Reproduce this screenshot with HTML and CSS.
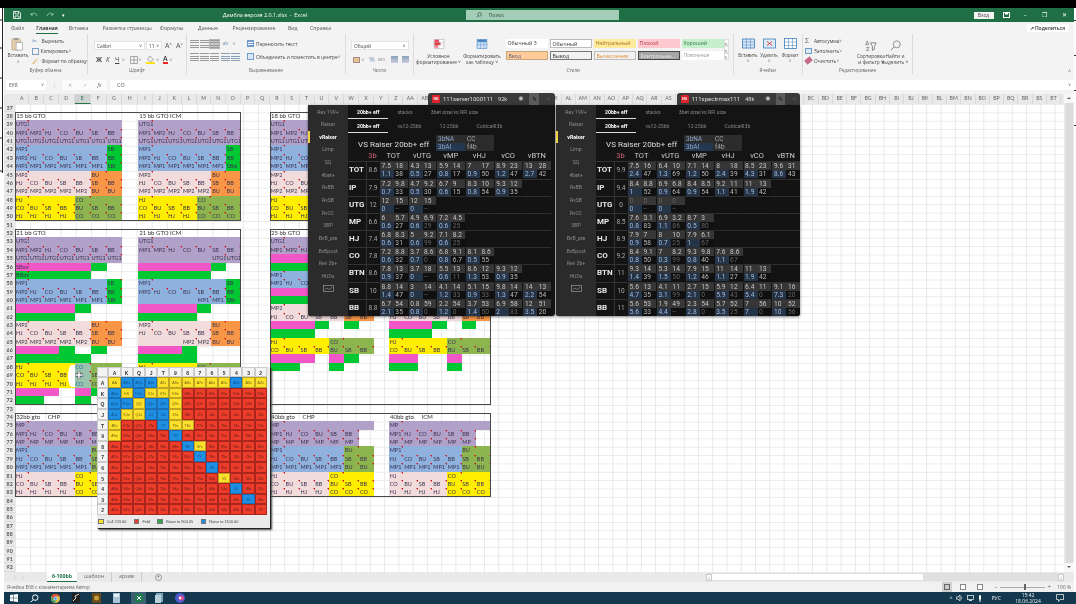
FILE: index.html
```html
<!DOCTYPE html>
<html lang="ru">
<head>
<meta charset="utf-8">
<title>Дамбла версия 2.0.1.xlsx - Excel</title>
<link rel="stylesheet" href="styles.css">
</head>
<body>
<div class="screen" id="screen">
  <div class="topblack"></div>
  <div class="main">
    <div class="edge"><svg width="4" height="200" viewBox="0 0 4 200"><path d="M2.5 0V165M0 12H3M0 40H3M0 70H3M0 100H3M0 130H3M0 163H3" stroke="#222" fill="none"/></svg></div>
    <div class="window">
      <header class="titlebar">
        <div class="qat">
          <svg width="8" height="8" viewBox="0 0 8 8"><path d="M.5.5H6L7.5 2V7.5H.5ZM2 .5V3H5.5V.5M2 7.5V5H6V7.5" fill="none" stroke="#fff" stroke-width=".8"/></svg>
          <svg class="qat-dim" width="8" height="6" viewBox="0 0 8 6"><path d="M1 3C3 0 6 1 7 4M1 1V3H3" fill="none" stroke="#8fbfa5"/></svg>
          <svg class="qat-dim" width="8" height="6" viewBox="0 0 8 6"><path d="M7 3C5 0 2 1 1 4M7 1V3H5" fill="none" stroke="#8fbfa5"/></svg>
          <span class="qat-more">▾</span>
        </div>
        <div class="doc">Дамбла версия 2.0.1.xlsx  -  Excel</div>
        <div class="search">
          <svg width="6" height="6" viewBox="0 0 6 6"><circle cx="3.6" cy="2.4" r="1.8" fill="none" stroke="#34543f" stroke-width=".7"/><path d="M2.3 3.7.6 5.4" stroke="#34543f" stroke-width=".7"/></svg>
          <span>Поиск</span>
        </div>
        <div class="winctl">
          <span class="login">Вход</span>
          <svg class="ctl-box" width="7" height="6" viewBox="0 0 7 6"><rect x=".5" y=".5" width="6" height="5" fill="none" stroke="#fff"/><rect x="2" y="1" width="3" height="1.5" fill="#fff"/></svg>
          <span class="ctl">–</span>
          <span class="ctl ctl-sq">❐</span>
          <span class="ctl">✕</span>
        </div>
      </header>

      <nav class="tabs">
        <span class="tab t1">Файл</span>
        <span class="tab t2 on">Главная</span>
        <span class="tab t3">Вставка</span>
        <span class="tab t4">Разметка страницы</span>
        <span class="tab t5">Формулы</span>
        <span class="tab t6">Данные</span>
        <span class="tab t7">Рецензирование</span>
        <span class="tab t8">Вид</span>
        <span class="tab t9">Справка</span>
        <span class="share">↗ Поделиться</span>
      </nav>

      <section class="ribbon">
        <div class="group g-clip">
          <div class="gbody">
            <div class="paste">
              <svg width="15" height="15" viewBox="0 0 15 15"><rect x="1.5" y="2" width="9" height="12" rx="1" fill="#e6cfae" stroke="#a98f6e" stroke-width=".6"/><rect x="4" y="1" width="4" height="2.4" fill="#999"/><rect x="6" y="6" width="7" height="8" fill="#fff" stroke="#8a8a8a" stroke-width=".6"/></svg>
              <span>Вставить</span><span class="caret">˅</span>
            </div>
            <div class="cliplist">
              <span><i class="ci cut">✂</i>Вырезать</span>
              <span><i class="ci copy"></i>Копировать <b class="caret">˅</b></span>
              <span><i class="ci brush">🖌</i>Формат по образцу</span>
            </div>
          </div>
          <div class="glabel">Буфер обмена</div>
        </div>

        <div class="group g-font">
          <div class="gbody col">
            <div class="line">
              <span class="combo c-font">Calibri<b>˅</b></span>
              <span class="combo c-size">11<b>˅</b></span>
              <span class="big">A<sup>˄</sup></span><span class="big">A<sup>˅</sup></span>
            </div>
            <div class="line fmt">
              <b class="fb">Ж</b><i class="fi">К</i><u class="fu">Ч</u><span class="caret">˅</span>
              <svg class="ml6" width="8" height="8" viewBox="0 0 8 8"><path d="M.5.5H7.5V7.5H.5ZM4 .5V7.5M.5 4H7.5" fill="none" stroke="#8a8a8a" stroke-width=".7"/></svg><span class="caret">˅</span>
              <svg class="ml6" width="9" height="9" viewBox="0 0 9 9"><path d="M4 1 7.5 4.5 4.5 7 1.5 4Z" fill="#eee" stroke="#777" stroke-width=".6"/><rect y="7.2" width="9" height="1.8" fill="#ffe000"/></svg><span class="caret">˅</span>
              <span class="fcolor">A</span><span class="caret">˅</span>
            </div>
          </div>
          <div class="glabel">Шрифт</div>
        </div>

        <div class="group g-align">
          <div class="gbody alignbody">
            <div class="aicons">
              <div class="line">
                <i class="al top"></i><i class="al mid"></i><i class="al bot active"></i><i class="al rot">ab</i><span class="caret">˅</span>
              </div>
              <div class="line">
                <i class="al left"></i><i class="al center"></i><i class="al right"></i><i class="al ind"></i><i class="al ind"></i>
              </div>
            </div>
            <div class="awrap">
              <span><i class="ai wrap"></i>Переносить текст</span>
              <span><i class="ai merge"></i>Объединить и поместить в центре <b class="caret">˅</b></span>
            </div>
          </div>
          <div class="glabel">Выравнивание</div>
        </div>

        <div class="group g-num">
          <div class="gbody col">
            <div class="line"><span class="combo c-num">Общий<b>˅</b></span></div>
            <div class="line numfmt">
              <i class="cash"></i><span class="caret">˅</span>
              <span class="pct">%</span><span class="k">000</span>
              <i class="dec"></i><i class="dec"></i>
            </div>
          </div>
          <div class="glabel">Число</div>
        </div>

        <div class="group g-styles">
          <div class="gbody stylesbody">
            <div class="bigbtn b-cond">
              <svg width="14" height="13" viewBox="0 0 14 13"><rect x=".5" y=".5" width="13" height="12" fill="#fff" stroke="#999" stroke-width=".6"/><rect x="1" y="1" width="6" height="3.5" fill="#e46"/><rect x="1" y="4.5" width="8" height="3.5" fill="#d33"/><rect x="1" y="8" width="5" height="3.5" fill="#e78"/><path d="M7 0V13M0 4.5H14M0 8H14" stroke="#aaa" stroke-width=".4"/></svg>
              <span>Условное<br>форматирование ˅</span>
            </div>
            <div class="bigbtn b-table">
              <svg width="14" height="13" viewBox="0 0 14 13"><rect x=".5" y=".5" width="13" height="12" fill="#cfe2f5" stroke="#3f7fbf" stroke-width=".7"/><path d="M0 4H14M0 7.5H14M5 0V13M9.5 0V13" stroke="#3f7fbf" stroke-width=".5"/><rect x="1" y="1" width="12" height="2.6" fill="#3f7fbf"/></svg>
              <span>Форматировать<br>как таблицу ˅</span>
            </div>
            <div class="gallery">
              <span class="st st-normal3">Обычный 3</span>
              <span class="st st-normal">Обычный</span>
              <span class="st st-neutral">Нейтральный</span>
              <span class="st st-bad">Плохой</span>
              <span class="st st-good">Хороший</span>
              <span class="st st-input">Ввод</span>
              <span class="st st-output">Вывод</span>
              <span class="st st-calc">Вычисления</span>
              <span class="st st-check">Контрольна...</span>
              <span class="st st-note">Пояснение</span>
            </div>
            <div class="gscroll"><i>˄</i><i>˅</i><i>≡</i></div>
          </div>
          <div class="glabel">Стили</div>
        </div>

        <div class="group g-cells">
          <div class="gbody cellsbody">
            <div class="cellbtn">
              <svg width="13" height="10" viewBox="0 0 13 10"><rect x=".5" y=".5" width="12" height="9" fill="#dbe9f7" stroke="#3f7fbf" stroke-width=".8"/><path d="M0 3.5H13M0 6.5H13M4.5 0V10M8.5 0V10" stroke="#3f7fbf" stroke-width=".5"/></svg>
              <span>Вставить</span><span class="caret">˅</span>
            </div>
            <div class="cellbtn">
              <svg width="13" height="10" viewBox="0 0 13 10"><rect x=".5" y=".5" width="12" height="9" fill="#dbe9f7" stroke="#3f7fbf" stroke-width=".8"/><path d="M4 3 9 7M9 3 4 7" stroke="#c33" stroke-width=".9"/></svg>
              <span>Удалить</span><span class="caret">˅</span>
            </div>
            <div class="cellbtn">
              <svg width="13" height="11" viewBox="0 0 13 11"><rect x=".5" y=".5" width="12" height="10" fill="#fff" stroke="#3f7fbf" stroke-width=".8"/><path d="M0 4H13M0 7.5H13M4.5 0V11M8.5 0V11" stroke="#3f7fbf" stroke-width=".5"/></svg>
              <span>Формат</span><span class="caret">˅</span>
            </div>
          </div>
          <div class="glabel">Ячейки</div>
        </div>

        <div class="group g-edit">
          <div class="gbody editbody">
            <div class="editlist">
              <span><i class="sig">Σ</i>Автосумма <b class="caret">˅</b></span>
              <span><i class="fill"></i>Заполнить <b class="caret">˅</b></span>
              <span><i class="eraser"></i>Очистить <b class="caret">˅</b></span>
            </div>
            <div class="bigbtn b-sort">
              <svg width="12" height="12" viewBox="0 0 12 12"><path d="M2 1 .5 5H3.5ZM1 8H4L1 11H4" fill="none" stroke="#555" stroke-width=".6"/><path d="M5.5 3H11.5L9.5 7V10L7.5 11V7Z" fill="none" stroke="#555" stroke-width=".7"/></svg>
              <span>Сортировка<br>и фильтр ˅</span>
            </div>
            <div class="bigbtn b-find">
              <svg width="13" height="13" viewBox="0 0 13 13"><circle cx="8" cy="5" r="4" fill="none" stroke="#666" stroke-width=".8"/><path d="M5 8 1 12" stroke="#666" stroke-width=".9"/></svg>
              <span>Найти и<br>выделить ˅</span>
            </div>
          </div>
          <div class="glabel">Редактирование</div>
        </div>
        <div class="collapse">˄</div>
      </section>

      <div class="formula">
        <span class="namebox">E68<b>˅</b></span>
        <span class="dots">⋮</span>
        <span class="fbtns"><i>✕</i><i>✓</i><i>fx</i></span>
        <span class="finput">CO<b>˅</b></span>
      </div>

      <div class="workarea">
        <div class="sheet" id="sheet"></div>
        <div class="vscroll"><i class="up"></i><span></span><i class="down"></i></div>
      </div>

      <div class="sheetbar">
        <span class="navs">‹ ›</span>
        <span class="stab active">6-100bb</span>
        <span class="stab">шаблон</span>
        <span class="stab">архив</span>
        <span class="add">+</span>
        <div class="hscroll"><i>‹</i><span></span><i class="hr">›</i></div>
      </div>

      <footer class="status">
        <span>Ячейка E68 с комментарием Автор</span>
        <div class="views">
          <i class="vw on"></i><i class="vw"></i><i class="vw"></i>
          <span class="zm">–</span><span class="slider"><b></b></span><span class="zm">+</span>
          <span class="pctv">100 %</span>
        </div>
      </footer>
    </div>
    <div class="edge redge"></div>
  </div>

  <div class="taskbar">
    <svg width="8" height="8" viewBox="0 0 8 8"><path d="M0 1 3.5.5V3.7H0ZM4 .4 8 0V3.7H4ZM0 4.2H3.5V7.4L0 7ZM4 4.2H8V8L4 7.5Z" fill="#fff"/></svg>
    <svg width="9" height="9" viewBox="0 0 9 9"><circle cx="5.2" cy="3.6" r="2.8" fill="none" stroke="#fff"/><path d="M3 5.8.8 8.2" stroke="#fff"/></svg>
    <svg width="9" height="9" viewBox="0 0 9 9"><circle cx="4.5" cy="4.5" r="4.5" fill="#e8b93c"/><path d="M4.5 0A4.5 4.5 0 0 0 .6 2.2L2.6 5.5 4.5 2.2H8.5A4.5 4.5 0 0 0 4.5 0Z" fill="#d8483a"/><path d="M.6 2.2A4.5 4.5 0 0 0 4 9L5.8 6 2.6 5.5Z" fill="#4d9e58"/><circle cx="4.5" cy="4.5" r="1.8" fill="#5aa0e8" stroke="#fff" stroke-width=".5"/></svg>
    <svg width="8" height="10" viewBox="0 0 8 10"><rect width="8" height="10" fill="#222"/><path d="M1 8 4 5 3 3 7 1" fill="none" stroke="#ddd"/></svg>
    <svg width="9" height="10" viewBox="0 0 9 10"><rect width="9" height="10" fill="#6a4a18"/><circle cx="4.5" cy="5" r="2.5" fill="#c79a3a"/></svg>
    <svg width="7" height="10" viewBox="0 0 7 10"><rect width="7" height="10" fill="#a9c3d6"/><rect x="1" y="1" width="5" height="3" fill="#e4eef5"/></svg>
    <span class="xl-slot"><svg width="8" height="8" viewBox="0 0 8 8"><rect width="8" height="8" fill="#1f7a4b"/><path d="M2 2 6 6M6 2 2 6" stroke="#fff" stroke-width="1"/></svg></span>
    <svg width="8" height="10" viewBox="0 0 8 10"><rect x="1" width="7" height="9" fill="#7fa7b8"/><rect y="2" width="6" height="8" fill="#b7d0da"/></svg>
    <svg width="10" height="10" viewBox="0 0 10 10"><circle cx="5" cy="5" r="5" fill="#4a5bd0"/><circle cx="6.2" cy="5" r="2.6" fill="#e8508a"/><circle cx="5" cy="5" r="1.2" fill="#fff"/></svg>
    <div class="tray">
      <span>^</span>
      <svg width="7" height="6" viewBox="0 0 7 6"><path d="M0 2H2L4 0V6L2 4H0ZM5 1.5C6 2.5 6 3.5 5 4.5" fill="none" stroke="#fff" stroke-width=".7"/></svg>
      <svg width="7" height="6" viewBox="0 0 7 6"><rect x=".5" y=".5" width="6" height="4" fill="none" stroke="#fff" stroke-width=".7"/><path d="M2 5.7H5" stroke="#fff"/></svg>
      <svg width="4" height="7" viewBox="0 0 4 7"><rect x="1" width="2" height="5" rx="1" fill="#fff"/><path d="M2 5V7" stroke="#fff"/></svg>
      <span class="lang">РУС</span>
      <span class="clock">15:42<br>18.06.2024</span>
      <svg width="8" height="8" viewBox="0 0 8 8"><path d="M.5.5H7.5V5.5H4L2.5 7.5V5.5H.5Z" fill="none" stroke="#fff" stroke-width=".7"/></svg>
    </div>
  </div>
</div>
<script src="app.js"></script>
</body>
</html>
```
FILE: styles.css
```css
* { box-sizing: border-box; }
html, body { margin: 0; padding: 0; background: #000; }
body { width: 1076px; height: 604px; overflow: hidden; font-family: "Open Sans", "Liberation Sans", sans-serif; color: #444; }
i { font-style: normal; }
.screen { position: relative; width: 1076px; height: 604px; overflow: hidden; display: flex; flex-direction: column; background: #fff; filter: blur(.35px); }
.topblack { height: 8px; background: #000; flex: none; }
.main { flex: 1; display: flex; min-height: 0; }
.edge { width: 4px; flex: none; background: #fff; }
.redge { width: 2px; background: repeating-linear-gradient(#333 0 1px, transparent 1px 35px) no-repeat 0 12px / 100% 110px; }
.window { flex: 1; min-width: 0; display: flex; flex-direction: column; background: #f3f3f3; }

/* title bar */
.titlebar { height: 14px; flex: none; background: #1f6e45; display: flex; align-items: center; position: relative; color: #fff; }
.qat { display: flex; align-items: center; padding-left: 9px; width: 461.5px; flex: none; }
.qat-dim { margin-left: 9px; }
.qat-dim + .qat-dim { margin-left: 8px; }
.qat-more { font-size: 5px; margin-left: 8px; }
.doc { position: absolute; left: 181px; width: 160px; text-align: center; font-size: 5.4px; white-space: pre; }
.search { width: 153px; height: 10px; flex: none; background: #a3cdb7; display: flex; align-items: center; padding-left: 10px; gap: 7px; color: #34543f; font-size: 5.2px; }
.winctl { margin-left: auto; display: flex; align-items: center; }
.login { width: 20px; height: 7px; background: #f4f4f4; color: #444; font-size: 4.8px; text-align: center; line-height: 7px; margin-right: 9px; }
.ctl-box { margin-right: 6px; }
.ctl { width: 19.5px; text-align: center; font-size: 6px; color: #fff; }
.ctl-sq { font-size: 6px; }

/* tabs */
.tabs { height: 12px; flex: none; display: flex; align-items: center; position: relative; font-size: 5.2px; color: #555; }
.tab { position: relative; white-space: nowrap; }
.t1 { margin-left: 7px; }
.t2 { margin-left: 12px; color: #222; font-weight: 600; }
.t2::after { content: ""; position: absolute; left: 0; right: 0; bottom: -2px; height: 1px; background: #1f6e45; }
.t3 { margin-left: 11px; }
.t4 { margin-left: 14px; }
.t5 { margin-left: 8px; }
.t6 { margin-left: 14.5px; }
.t7 { margin-left: 14.5px; }
.t8 { margin-left: 12.5px; }
.t9 { margin-left: 12.5px; }
.share { margin-left: auto; margin-right: 6px; padding: 1px 3px; background: #fff; font-weight: 600; font-size: 5px; color: #333; }

/* ribbon */
.ribbon { height: 41px; flex: none; display: flex; position: relative; font-size: 4.8px; color: #444; }
.group { display: flex; flex-direction: column; flex: none; border-right: 1px solid #dcdcdc; margin-bottom: 1px; }
.gbody { flex: 1; display: flex; min-height: 0; }
.col { flex-direction: column; }
.glabel { height: 8px; line-height: 8px; text-align: center; font-size: 4.6px; color: #666; }
.caret { font-size: 4.5px; font-weight: 400; color: #777; }
.line { display: flex; align-items: center; height: 13px; }
.g-clip { width: 84px; }
.g-font { width: 99px; }
.g-align { width: 159px; }
.g-num { width: 68px; }
.g-styles { width: 319.5px; }
.g-cells { width: 69.5px; }
.g-edit { width: 110px; border-right: 1px solid #dcdcdc; }
.paste { width: 30px; display: flex; flex-direction: column; align-items: center; padding-top: 3px; line-height: 7px; }
.paste svg { margin-bottom: 1px; }
.cliplist { display: flex; flex-direction: column; padding-top: 2px; }
.cliplist span { height: 10px; line-height: 10px; white-space: nowrap; display: flex; align-items: center; }
.ci { width: 8px; height: 7px; margin-right: 1.5px; font-size: 6px; line-height: 7px; color: #5a7fa8; display: block; }
.copy { border: 1px solid #7f9fc0; width: 7px; }
.brush { color: #d58a2a; font-size: 5px; }
.g-font .gbody { padding: 5px 0 0 6px; }
.combo { display: flex; justify-content: space-between; align-items: center; height: 9px; padding: 0 2px; background: #fff; border: 1px solid #e4e4e4; }
.combo b { font-weight: 400; font-size: 4.5px; }
.c-font { width: 51px; }
.c-size { width: 16px; margin-left: 1px; }
.big { font-size: 7px; margin-left: 3px; width: 8px; color: #555; }
.big sup { font-size: 4px; }
.fmt { margin-top: 1px; }
.fb { font-size: 6.4px; margin-left: 2px; width: 10px; }
.fi { font-size: 6.4px; font-style: italic; width: 9px; }
.fu { font-size: 6.4px; width: 7px; }
.ml6 { margin-left: 5px; margin-right: 1px; }
.fcolor { font-size: 7px; margin-left: 4px; margin-right: 2px; font-weight: 600; color: #333; border-bottom: 2px solid #e22; line-height: 6px; }
.alignbody { padding: 3px 0 0 3px; }
.aicons { width: 57px; flex: none; }
.al { width: 9px; height: 8px; margin-right: 1.2px; display: block; font-size: 5px; background: repeating-linear-gradient(#999 0 1px, transparent 1px 2.5px); }
.al.active { background-color: #c8c8c8; outline: 1px solid #b5b5b5; }
.al.rot { background: none; color: #7792b0; margin-left: 2px; }
.al.ind { background: repeating-linear-gradient(#8aa0b8 0 1px, transparent 1px 2.5px); }
.awrap { display: flex; flex-direction: column; }
.awrap span { height: 13px; display: flex; align-items: center; white-space: nowrap; }
.ai { width: 7px; height: 7px; margin-right: 2px; display: block; border: 1px solid #6f9cc8; background: #dbe9f7; }
.wrap { background: repeating-linear-gradient(#6f9cc8 0 1px, #fff 1px 2px); }
.g-num .gbody { padding: 5px 0 0 5px; }
.c-num { width: 57.5px; }
.numfmt { margin-top: 1px; }
.cash { width: 8px; height: 6px; background: #e2c78f; border: 1px solid #a88; display: block; margin-left: 2px; }
.numfmt .caret { margin: 0 5px 0 1px; }
.pct { font-size: 7px; color: #7792b0; margin-right: 3px; }
.k { font-size: 4px; color: #777; margin-right: 6px; }
.dec { width: 8px; height: 7px; margin-right: 4px; background: linear-gradient(#8aa0b8, #ccd); display: block; }
.stylesbody { padding-top: 5px; }
.bigbtn { display: flex; flex-direction: column; align-items: center; text-align: center; white-space: nowrap; line-height: 6.6px; }
.bigbtn svg { margin-bottom: 4px; }
.b-cond { width: 47px; margin-left: 1px; }
.b-table { width: 40px; margin-right: 1px; }
.gallery { width: 218px; flex: none; display: grid; grid-template-columns: repeat(5, 42px); grid-template-rows: 9px 9px; gap: 2.5px 2px; margin-left: 2.5px; }
.st { display: block; line-height: 8px; padding-left: 2px; font-size: 5.2px; white-space: nowrap; overflow: hidden; }
.st-normal3 { background: #fff; color: #333; }
.st-normal { background: #fff; color: #333; border: 1px solid #bbb; }
.st-neutral { background: #ffeb9c; color: #a8701a; }
.st-bad { background: #ffc7ce; color: #b33a45; }
.st-good { background: #c6efce; color: #2f7a3a; }
.st-input { background: #ffcc99; color: #5f5f80; border: 1px solid #c9a57e; }
.st-output { background: #f2f2f2; color: #333; border: 1px solid #777; }
.st-calc { background: #f2f2f2; color: #e48a33; border: 1px solid #bbb; }
.st-check { background: #a5a5a5; color: #eee; border: 1px solid #444; }
.st-note { background: #fff; color: #999; font-style: italic; }
.gscroll { width: 5px; margin-left: 0; display: flex; flex-direction: column; font-size: 4px; text-align: center; }
.gscroll i { height: 7px; line-height: 7px; background: #fafafa; border: 1px solid #ddd; }
.cellsbody { padding: 4px 0 0 4px; gap: 0; }
.cellbtn { width: 21px; display: flex; flex-direction: column; align-items: center; line-height: 6px; font-size: 4.4px; }
.cellbtn svg { margin-bottom: 2.5px; height: 11px; }
.editbody { padding-top: 1.5px; }
.editlist { width: 50px; flex: none; padding-left: 2px; display: flex; flex-direction: column; }
.editlist span { height: 10px; display: flex; align-items: center; white-space: nowrap; }
.sig { font-size: 7px; width: 9px; color: #666; }
.fill { width: 7px; height: 6px; margin-right: 2px; border: 1px solid #6f9cc8; background: #dbe9f7; display: block; }
.eraser { width: 7px; height: 5px; margin-right: 2px; background: #c56a8a; transform: rotate(-40deg); display: block; }
.editbody .bigbtn { padding-top: 4px; line-height: 6.6px; }
.editbody .bigbtn svg { margin-bottom: 2px; }
.b-sort { width: 36px; }
.b-find { width: 22px; margin-left: -5px; }
.collapse { position: absolute; right: 3px; bottom: 1px; font-size: 5px; color: #666; }

/* formula */
.formula { height: 10px; margin: 5px 0 4px; flex: none; display: flex; align-items: center; padding-left: 2px; padding-right: 0; }
.namebox { width: 40px; height: 10px; background: #fff; padding: 0 2px 0 3px; display: flex; justify-content: space-between; align-items: center; font-size: 5px; color: #555; }
.namebox b { font-weight: 400; font-size: 4.5px; }
.dots { width: 16px; text-align: center; font-size: 5px; color: #bbb; }
.fbtns { width: 45px; height: 10px; background: #fbfbfb; display: flex; justify-content: space-around; align-items: center; font-size: 5px; color: #aaa; }
.fbtns i:last-child { color: #555; font-style: italic; }
.finput { flex: 1; margin-left: 3px; height: 10px; background: #fff; display: flex; justify-content: space-between; align-items: center; padding: 0 3px 0 7px; font-size: 5.4px; color: #555; }
.finput b { font-weight: 400; font-size: 4.5px; }

/* sheet */
.workarea { flex: none; height: 478px; display: flex; background: #fff; }
.sheet { width: 1060px; flex: none; height: 478px; overflow: hidden; display: grid; background: #fff;
  grid-template-columns: 11.3px 14px 14.7px 15px 15.7px 16px 16px 15.3px 16.3px repeat(7, 14.63px) repeat(2, 14.65px) repeat(7, 14.86px) 15px repeat(7, 14.53px) repeat(42, 14.27px);
  grid-template-rows: 9.7px repeat(56, 8.36px); font-family: Lato, "Liberation Sans", sans-serif; }
.corner { grid-area: 1 / 1; background: #e9e9e9; }
.colh { grid-row: 1; background: #e9e9e9; border-right: 1px solid #d9d9d9; text-align: center; font-size: 5.2px; line-height: 9.7px; color: #666; white-space: nowrap; overflow: hidden; }
.colh.cur { background: #cfd2d0; border-bottom: 1px solid #217346; color: #1f6e45; }
.rowh { grid-column: 1; background: #e9e9e9; border-bottom: 1px solid #dcdcdc; text-align: center; font-size: 5.3px; line-height: 8.2px; color: #555; font-weight: 700; }
.zone { grid-row: 2 / -1; background-image: linear-gradient(#e9ebea 1px, transparent 1px), linear-gradient(90deg, #e6e9e8 1px, transparent 1px); background-size: 14.86px 8.36px; }
.zone-l { grid-column: 2 / 19; background-size: 15.2px 8.36px; }
.zone-r { grid-column: 19 / -1; background-size: 14.27px 8.36px; }
.frame { border: 1px solid #4a4a4a; z-index: 2; }
.f1 { grid-area: 3 / 2 / 16 / 17; }
.f2 { grid-area: 3 / 19 / 16 / 34; }
.f3 { grid-area: 17 / 2 / 38 / 17; }
.f4 { grid-area: 17 / 19 / 38 / 34; }
.f5 { grid-area: 39 / 2 / 49 / 17; }
.f6 { grid-area: 39 / 19 / 49 / 34; }
.block { display: grid; grid-auto-rows: 8.36px; z-index: 1; }
.ca { grid-column: 2 / 9; grid-template-columns: 14px 14.7px 15px 15.7px 16px 16px 15.3px; }
.cb { grid-column: 10 / 17; grid-template-columns: repeat(7, 14.63px); }
.cc { grid-column: 19 / 26; grid-template-columns: repeat(7, 14.86px); }
.cd { grid-column: 27 / 34; grid-template-columns: repeat(7, 14.53px); }
.r38 { grid-row: 3 / 16; }
.r52 { grid-row: 17 / 38; }
.r74 { grid-row: 39 / 49; }
.btitle { grid-column: 1 / -1; font-size: 6px; line-height: 8.36px; padding-left: 1px; color: #333; white-space: pre; }
.c { position: relative; font-size: 5.5px; line-height: 8.36px; padding-left: .8px; color: #3a3350; white-space: nowrap; }
.c.txt::after { content: ""; position: absolute; top: 0; right: 0; border-style: solid; border-width: 2px 0 0 2px; border-color: #d0101a transparent transparent transparent; }
.p { background: #b1a0c7; }
.b { background: #8fb1de; }
.s { background: #f2dcdb; }
.y { background: #ffee00; }
.g { background: #00c832; }
.o { background: #f79646; }
.l { background: #8db54f; }
.m { background: #f257c8; }
.sel { background: #9bc2ab; color: #1f6fb0; }
.spot { position: absolute; left: 68px; top: 365px; width: 7px; height: 22px; border-radius: 100% 0 0 100%; background: #fff; z-index: 3; }
.cursor { position: absolute; left: 75px; top: 371px; z-index: 4; }
.vscroll { flex: 1; display: flex; flex-direction: column; align-items: center; background: #e8e8e8; }
.vscroll span { flex: 1; width: 7px; background: #dcdcdc; }
.vscroll i { height: 9px; background: #f8f8f8; width: 100%; position: relative; flex: none; }
.vscroll i::before { content: ""; position: absolute; left: calc(50% - 2px); top: 3px; border-style: solid; border-color: transparent; border-width: 0 2px 2px; border-bottom-color: #666; }
.vscroll .down::before { border-width: 2px 2px 0; border-top-color: #666; }

/* sheet tabs + status */
.sheetbar { height: 10px; flex: none; background: #e9e9e9; display: flex; align-items: center; position: relative; font-size: 5.2px; color: #666; }
.navs { width: 43px; padding-left: 10px; color: #bbb; font-size: 6px; word-spacing: 5px; }
.stab { padding: 0 7px; height: 10px; line-height: 9px; border-right: 1px solid #ccc; }
.stab.active { background: #fff; color: #1f6e45; font-weight: 700; border-bottom: 1px solid #1f6e45; border-right: 0; width: 30px; padding: 0; text-align: center; }
.add { margin-left: 13px; width: 7px; height: 7px; border: 1px solid #999; border-radius: 50%; font-size: 5px; line-height: 5px; text-align: center; }
.hscroll { position: absolute; left: 702px; right: 10px; top: 1px; height: 8px; display: flex; align-items: center; background: #e0e0e0; font-size: 5px; }
.hscroll i { width: 6px; height: 7px; line-height: 6px; text-align: center; background: #fafafa; border: 1px solid #ccc; }
.hscroll span { width: 211px; height: 6px; background: #fff; margin-left: 0; margin-right: auto; }
.status { height: 10px; flex: none; background: #f1f1f1; display: flex; align-items: center; justify-content: space-between; padding-left: 3px; font-size: 4.9px; color: #666; }
.views { display: flex; align-items: center; padding-right: 3px; }
.vw { width: 6px; height: 6px; border: 1px solid #888; background: #fff; margin-right: 10.5px; display: block; }
.vw.on { background: #ccc; border-color: #666; box-shadow: 0 0 0 2px #d0d0d0; }
.zm { font-size: 6px; width: 6px; text-align: center; }
.slider { position: relative; width: 45px; height: 1px; background: #aaa; margin: 0 1px; }
.slider b { position: absolute; left: 24px; top: -3px; width: 2px; height: 6px; background: #666; }
.pctv { margin-left: 5px; }

/* taskbar */
.taskbar { height: 12px; flex: none; background: #14394f; margin-left: 4px; display: flex; align-items: center; gap: 12px; padding-left: 6px; color: #fff; }
.xl-slot { width: 15px; height: 12px; background: #3d6072; display: flex; justify-content: center; align-items: center; margin: 0 -3px 0 -1px; }
.tray { margin-left: auto; display: flex; align-items: center; gap: 4px; padding-right: 12px; font-size: 5.2px; color: #eee; }
.lang { margin: 0 6px 0 5px; }
.clock { text-align: center; line-height: 6.5px; font-size: 5px; width: 34px; margin-right: 7px; }

/* HUD */
.hud { position: absolute; z-index: 6; font-family: Roboto, "Liberation Sans", sans-serif; color: #ccc; }
.hud1 { left: 308px; top: 92.5px; width: 247px; }
.hud2 { left: 556px; top: 92.5px; width: 244px; }
.hudtitle { height: 12.5px; margin-left: auto; background: #3a3a3a; border-radius: 3px 3px 0 0; display: flex; align-items: center; font-size: 6px; color: #ddd; }
.hud1 .hudtitle { width: 127px; }
.hud2 .hudtitle { width: 123.5px; }
.logo { width: 8px; height: 8px; margin: 0 3px 0 4px; background: #d8242a; border-radius: 1px; font-size: 3.6px; line-height: 8px; text-align: center; color: #fff; font-weight: 700; flex: none; }
.hname { width: 55px; white-space: nowrap; }
.hnum { width: 18px; font-size: 5.6px; }
.gear { font-size: 7px; width: 10px; color: #bbb; text-align: center; }
.pin { width: 10px; height: 12.5px; margin-left: 3px; background: #5a5a5a; text-align: center; font-size: 6px; line-height: 12.5px; color: #111; }
.hclose { width: 12px; margin-left: 3px; text-align: center; font-size: 6px; color: #555; }
.hbody { height: 211px; background: #141414; display: flex; border-radius: 0 0 3px 3px; box-shadow: 0 1px 3px rgba(0,0,0,.5); overflow: hidden; }
.side { width: 40px; flex: none; background: #2b2b2b; display: flex; flex-direction: column; padding-top: .5px; }
.side span { height: 12.65px; line-height: 12.65px; text-align: center; font-size: 5.2px; color: #8a8a8a; white-space: nowrap; position: relative; }
.side .cur { color: #fff; font-weight: 700; }
.side .cur::before { content: ""; position: absolute; left: 0; top: 0; width: 2px; height: 12px; background: #f0d040; }
.side svg { display: block; margin: 3px auto; }
.hmain { flex: 1; min-width: 0; display: flex; flex-direction: column; }
.htabs { display: flex; height: 14px; align-items: center; font-size: 5.2px; color: #888; white-space: nowrap; }
.htabs span { position: relative; height: 14px; line-height: 14px; padding: 0 9px; }
.htabs .on { color: #fff; font-weight: 700; border-bottom: 1px solid #ddd; }
.hhead { height: 20px; display: flex; align-items: flex-start; padding-top: 2px; }
.htl { width: 88px; flex: none; padding: 5px 0 0 10px; font-size: 8px; color: #ddd; white-space: nowrap; letter-spacing: .05px; }
.hleg { width: 58px; height: 16px; display: grid; grid-template-columns: 29px 29px; grid-auto-rows: 8px; font-size: 6.5px; line-height: 8px; background: #2c2c2c; }
.hleg span { padding-left: 2px; color: #aaa; }
.hleg .n { color: #93a8c4; }
.hleg .a { background: #24374f; color: #93a8c4; }
.hgrid { flex: none; display: grid; grid-template-rows: 10px repeat(9, 17.2px); margin-top: -.5px; }
.hud1 .hgrid { grid-template-columns: 18px 13px repeat(6, 28.7px); }
.hud2 .hgrid { grid-template-columns: 18px 13px repeat(6, 28.9px); }
.hh { text-align: center; font-size: 7.5px; line-height: 10px; color: #ccc; }
.hh.r { color: #d2607a; }
.hl { border-top: 1px solid #333; font-size: 8px; font-weight: 700; color: #e8e8e8; line-height: 16px; padding-left: 1px; }
.h3 { border-top: 1px solid #333; border-left: 1px solid #333; font-size: 6.5px; line-height: 16px; text-align: center; color: #aaa; }
.hm { border-top: 1px solid #2f2f2f; border-left: 1px solid #141414; display: grid; grid-template-columns: 1fr 1fr; grid-template-rows: 8px 8px; font-size: 6.6px; line-height: 8px; letter-spacing: .1px; }
.hm span { padding-left: 1.5px; overflow: hidden; white-space: nowrap; }
.hm .a1, .hm .a2 { background: #363636; color: #c8c8c8; }
.hm .b1 { background: #263448; color: #a5bcd8; }
.hm .b2 { background: #101010; color: #bbb; }
.hm .dim { color: #666; }
.hm.none { background: #131313; }

/* matrix popup */
.popup { position: absolute; z-index: 5; left: 96.7px; top: 367.3px; width: 173.3px; height: 161px; background: #eaeaea; box-shadow: 1px 1px 1px #222, 2px 2px 2px #555; display: flex; flex-direction: column; font-family: "Liberation Sans", sans-serif; }
.mx { display: grid; grid-template-columns: 11.7px repeat(13, 12.2px); grid-template-rows: 10px repeat(13, 10.6px); flex: none; }
.mh { background: #f4f4f4; border: .5px solid #ccc; text-align: center; font-size: 5px; font-weight: 700; line-height: 10px; color: #333; }
.mc { border: .5px solid #a8261c; text-align: center; font-size: 3.6px; line-height: 10px; color: #55201a; white-space: nowrap; overflow: hidden; }
.mc.my { background: #fde02c; color: #6a5a10; border-color: #bfa520; }
.mc.mb { background: #1f8fe3; color: #0d4a80; border-color: #1a70b8; }
.mc.mr { background: #ee3c2a; }
.legend { flex: 1; display: flex; align-items: center; font-size: 3.9px; color: #444; padding-left: 1.5px; }
.legend i { width: 5.5px; height: 5.5px; margin-right: 3px; display: block; border: .5px solid #777; }
.legend span { margin-right: 7.5px; }
.ly { background: #fde02c; }
.lr { background: #ee3c2a; }
.lg { background: #2ea84a; }
.lb { background: #1f8fe3; }
```
FILE: app.js
```javascript
// Spreadsheet blocks, HUD windows and the range popup are built from their data.
const sheet = document.getElementById('sheet');
const screenEl = document.getElementById('screen');
const el = (tag, cls, txt) => {
  const n = document.createElement(tag);
  if (cls) n.className = cls;
  if (txt !== undefined) n.textContent = txt;
  return n;
};

// headers
function colName(i) {
  const A = 'ABCDEFGHIJKLMNOPQRSTUVWXYZ';
  return i < 26 ? A[i] : A[Math.floor(i / 26) - 1] + A[i % 26];
}
sheet.appendChild(el('div', 'corner'));
for (let i = 0; i < 72; i++) sheet.appendChild(el('div', 'colh' + (i === 4 ? ' cur' : ''), colName(i)));
sheet.appendChild(el('div', 'colh'));
for (let r = 37; r <= 92; r++) sheet.appendChild(el('div', 'rowh', r));
sheet.appendChild(el('div', 'zone zone-l'));
sheet.appendChild(el('div', 'zone zone-r'));

const U = 'UTG1 UTG1 UTG1 UTG1 UTG1 UTG1 UTG1';
const OPEN = 'MP1 MP2 HJ CO BU SB BB';
const M6 = 'MP1 MP1 MP1 MP1 MP1 MP1';
const pur = [['ppppppp', 'UTG1'], ['ppppppp', OPEN], ['ppppppp', U]];
const tail = (l) => [['bbbbbbg', 'MP1 _ _ _ _ _ SB'], ['bbbbbbg', 'MP2 HJ CO BU SB BB BB'], ['bbbbbbg', M6 + ' ' + l]];
const sal = [['sssssoo', 'MP2 _ _ _ _ BU'], ['sssssoo', 'HJ CO BU SB BB SB BB'], ['sssssoo', 'MP2 MP2 MP2 MP2 MP2 BU BU']];
const yel = [['yyyylll', 'HJ _ _ _ CO'], ['yyyylll', 'CO BU SB BB BU SB BB'], ['yyyylll', 'HJ HJ HJ HJ CO CO CO']];
const t15a = [...pur, ...tail('SBr'), ...sal, ...yel];
const t15b = [...pur, ...tail('SBai'), ...sal, ...yel];
const t21a = [...pur, ['mmmmmgw', 'SBover'], ['gggggww', 'BBover'], ...tail('SBr'),
  ['mmmmgww', ''], ['ggggwww', ''], ...sal,
  ['mmmgwgw', ''], ['gggggww', ''],
  ['yyyylll', 'HJ _ _ _ CO'], ['yyyylll', 'CO BU SB BB CO SB BB'], ['yyyylll', 'HJ HJ HJ HJ CO CO CO'],
  ['mmmwmgw', ''], ['ggwwgww', '']];
const t21b = [['ppppppp', 'UTG1'], ['ppppppp', OPEN], ['ppppppp', '_ _ _ _ _ UTG1 UTG1'],
  ['mmmmmgw', ''], ['gggggww', ''],
  ['bbbbbbg', 'MP1 _ _ _ _ _ SB'], ['bbbbbbg', 'MP2 HJ CO BU SB BB BB'], ['bbbbbbg', '_ _ _ _ MP1 MP1 SBr'],
  ['mmmmgww', ''], ['ggggwww', ''],
  ['sssssoo', 'MP2 _ _ _ _ BU'], ['sssssoo', 'HJ CO BU SB BB SB BB'], ['sssssoo', '_ _ _ MP2 MP2 BU BU'],
  ['mmmgwww', ''], ['ggggwww', ''], ...yel, ['mmmwmgw', ''], ['ggwwgww', '']];
const t25 = (m, g) => [['ppppppp', 'UTG1'], ['ppppppp', OPEN], ['mmmmmgw', ''], ['gggggww', ''],
  ['bbbbbbg', 'MP1 _ _ _ _ _ SB'], ['bbbbbbg', 'MP2 HJ CO BU SB BB BB'], ['mmmmgww', ''], ['ggggwww', ''],
  ['sssssoo', 'MP2 _ _ _ _ BU'], ['sssssoo', 'HJ CO BU SB BB SB BB'],
  ['mmmgwgw', ''], ['gggwwww', ''],
  ['yyyylll', 'HJ _ _ _ CO'], ['yyyylll', 'CO BU SB BB BU SB BB'], [m, ''], [g, '']];
const t40 = [['ppppppp', 'MP'], ['ppppppw', 'MP1 HJ CO BU SB BB'], ['ppppppw', 'MP MP MP MP MP MP'],
  ['bbbbbll', 'MP1 _ _ _ _ BU'], ['bbbbbll', 'HJ CO BU SB BB SB BB'], ['bbbbbll', 'MP1 MP1 MP1 MP1 MP1 BU BU'],
  ['ssssyyy', 'HJ _ _ _ CO'], ['ssssyyy', 'CO BU SB BB BU SB BB'], ['ssssyyy', 'HJ HJ HJ HJ CO CO CO']];

function block(col, row, title, rows, selCol) {
  const b = el('div', 'block ' + col + ' ' + row);
  b.appendChild(el('div', 'btitle', title));
  rows.forEach((r, ri) => {
    const words = r[1] ? r[1].split(' ') : [];
    [...r[0]].forEach((ch, i) => {
      const t = words[i] && words[i] !== '_' ? words[i] : '';
      let cls = 'c ' + (ch === 'w' ? '' : ch) + (t ? ' txt' : '');
      if (selCol && selCol(ri, i)) cls += ' sel';
      b.appendChild(el('div', cls, t));
    });
  });
  sheet.appendChild(b);
}
['f1', 'f2', 'f3', 'f4', 'f5', 'f6'].forEach((f) => sheet.appendChild(el('div', 'frame ' + f)));
block('ca', 'r38', '15 bb GTO', t15a);
block('cb', 'r38', '15 bb GTO ICM', t15b);
block('cc', 'r38', '18 bb GTO', t15a);
block('ca', 'r52', '21 bb GTO', t21a, (r, i) => r >= 15 && r <= 17 && i === 4);
block('cb', 'r52', '21 bb GTO ICM', t21b);
block('cc', 'r52', '25 bb GTO', t25('mmmwmgw', 'ggwwgww'));
block('cd', 'r52', '', t25('mmwwmww', 'ggwwgww'));
block('ca', 'r74', '32bb gto     CHP', t40);
block('cc', 'r74', '40bb gto     CHP', t40);
block('cd', 'r74', '40bb gto     ICM', t40);

screenEl.appendChild(el('div', 'spot'));
const cur = document.createElementNS('http://www.w3.org/2000/svg', 'svg');
cur.setAttribute('class', 'cursor');
cur.setAttribute('width', '8');
cur.setAttribute('height', '8');
cur.setAttribute('viewBox', '0 0 8 8');
cur.innerHTML = '<path d="M3 0H5V3H8V5H5V8H3V5H0V3H3Z" fill="#fff" stroke="#333" stroke-width=".5"/>';
screenEl.appendChild(cur);

// range popup
const R = 'AKQJT98765432'.split('');
const map = [
  'ybbbyyyyyybyy',
  'bybyyyrrrrrrr',
  'bbybbyrrrrrrr',
  'byybbyrrrrrrr',
  'yrrrbyyrrrrrr',
  'yrrrrbrrrrrrr',
  'rrrrrrbyrrrrr',
  'rrrrrrrbrrrrr',
  'rrrrrrrrbrrrr',
  'rrrrrrrrryrrr',
  'rrrrrrrrrrbrr',
  'rrrrrrrrrrrbr',
  'rrrrrrrrrrrrr'
];
const pop = el('div', 'popup');
const mx = el('div', 'mx');
mx.appendChild(el('div', 'mh'));
R.forEach((x) => mx.appendChild(el('div', 'mh', x)));
R.forEach((a, i) => {
  mx.appendChild(el('div', 'mh', a));
  R.forEach((b, j) => {
    const t = i === j ? a + a : j > i ? a + b + 's' : b + a + 'o';
    mx.appendChild(el('div', 'mc m' + map[i][j], t));
  });
});
pop.appendChild(mx);
const leg = el('div', 'legend');
[['ly', 'Call 223.00'], ['lr', 'Fold'], ['lg', 'Raise to 904.05'], ['lb', 'Raise to 1100.00']].forEach(([c, t]) => {
  leg.appendChild(el('i', c));
  leg.appendChild(el('span', '', t));
});
pop.appendChild(leg);
screenEl.appendChild(pop);

// HUD windows ("~" marks a greyed low-sample value)
const sideItems = ['Rev 199+', 'Raiser', 'vRaiser', 'Limp', 'SQ', '4bet+', 'RvBB', 'RvSB', 'RvCC', '3BP', 'BvB_pre', 'BvBpost', 'Rev 3b+', 'HUDs'];
const heads = ['TOT', 'vUTG', 'vMP', 'vHJ', 'vCO', 'vBTN'];
const huds = [
  { cls: 'hud1', name: '111server1000111', n: '92k', rows: [
    ['TOT', '8.6', ['7.5 18 1.1 38', '4.3 13 0.5 27', '5.9 14 0.8 17', '7 17 0.9 50', '8.9 23 1.2 47', '13 28 2.7 42']],
    ['IP', '7.9', ['7.2 9.8 0.7 33', '4.7 9.2 0.5 30', '6.7 9 0.6 15', '8.3 10 0.8 54', '9.3 12 0.9 35']],
    ['UTG', '12', ['12 15 0 ~--', '12 15 0 ~--']],
    ['MP', '6.6', ['6 5.7 0.6 27', '4.9 6.9 0.6 ~29', '7.2 4.5 0.6 ~25']],
    ['HJ', '7.4', ['6.8 8.3 0.6 31', '5 9.2 0.6 ~99', '7.1 8.2 0.6 ~25']],
    ['CO', '7.8', ['7.2 8.8 0.6 32', '3.7 8.6 0.7 ~0', '6.8 9.1 0.8 6.7', '8.1 8.6 0.5 55']],
    ['BTN', '8.6', ['7.8 13 0.9 37', '3.7 18 0 ~--', '5.5 13 0.6 ~11', '8.6 12 1.3 53', '9.3 12 0.9 35']],
    ['SB', '10', ['8.8 14 1.4 47', '3 14 0 ~--', '4.1 14 1.2 ~33', '5.1 15 0.9 ~33', '9.8 14 1.3 47', '14 13 2.2 54']],
    ['BB', '8.8', ['6.7 54 2.1 35', '0.8 59 0.8 ~0', '2.2 54 1.2 ~0', '3.7 53 1.4 ~50', '6.9 58 2 ~83', '12 51 3.5 20']]
  ] },
  { cls: 'hud2', name: '111spectrmax111', n: '48k', rows: [
    ['TOT', '9.9', ['7.5 16 2.4 47', '6.4 10 1.3 69', '7.1 14 1.2 50', '8 18 2.4 39', '8.5 23 4.3 31', '9.6 31 8.6 43']],
    ['IP', '9.4', ['8.4 8.8 1 52', '6.9 6.8 0.9 64', '8.4 8.5 0.9 54', '9.2 11 1.1 41', '11 13 1.9 42']],
    ['UTG', '~0', ['~0 ~0 0 ~--', '~0 ~0 0 ~--']],
    ['MP', '8.5', ['7.6 3.1 0.8 83', '6.9 3.2 1.1 ~86', '8.7 3 0.5 ~80']],
    ['HJ', '8.9', ['7.9 7 0.9 58', '8 10 0.7 ~25', '7.9 6.1 1 ~67']],
    ['CO', '9.2', ['8.4 9.1 0.8 50', '7 8.2 0.3 ~99', '9.3 9.8 0.8 40', '7.6 8.6 1.1 ~67']],
    ['BTN', '11', ['9.3 14 1.4 39', '5.3 14 1.5 ~50', '7.9 15 1.2 46', '11 14 1.1 27', '11 13 1.9 42']],
    ['SB', '10', ['5.6 13 4.7 35', '4.1 11 3.1 ~99', '2.7 15 2.1 ~0', '5.9 12 5.9 ~43', '6.4 11 5.4 ~0', '9.1 16 7.3 ~20']],
    ['BB', '11', ['5.6 53 5.6 33', '1.9 49 4.4 ~--', '2.3 54 2.8 ~0', '5.7 52 3.5 ~25', '7 56 7 ~0', '10 52 10 ~56']]
  ] }
];
const val = (cls, v) => el('span', cls + (v[0] === '~' ? ' dim' : ''), v.replace('~', ''));
function tabRow(items) {
  const r = el('div', 'htabs');
  items.forEach((t, i) => r.appendChild(el('span', i === 0 ? 'on' : '', t)));
  return r;
}
huds.forEach((h) => {
  const w = el('div', 'hud ' + h.cls);
  const tb = el('div', 'hudtitle');
  tb.appendChild(el('span', 'logo', 'HG'));
  tb.appendChild(el('span', 'hname', h.name));
  tb.appendChild(el('span', 'hnum', h.n));
  tb.appendChild(el('span', 'gear', '✹'));
  tb.appendChild(el('span', 'pin', '✎'));
  tb.appendChild(el('span', 'hclose', '✕'));
  w.appendChild(tb);
  const body = el('div', 'hbody');
  const side = el('div', 'side');
  sideItems.forEach((s) => side.appendChild(el('span', s === 'vRaiser' ? 'cur' : '', s)));
  const ic = el('span');
  ic.innerHTML = '<svg width="11" height="7" viewBox="0 0 11 7"><rect x=".5" y=".5" width="10" height="6" fill="none" stroke="#999" stroke-width=".7"/><path d="M1.5 5 4 3 6 4.5 9.5 2" fill="none" stroke="#999" stroke-width=".6"/></svg>';
  side.appendChild(ic);
  body.appendChild(side);
  const m = el('div', 'hmain');
  m.appendChild(tabRow(['20bb+ eff', 'stacks', '3bet size/vs RFI size']));
  m.appendChild(tabRow(['20bb+ eff', 'vs12-25bb', '12-25bb', 'ColdcallI3b']));
  const hd = el('div', 'hhead');
  hd.appendChild(el('div', 'htl', 'VS Raiser 20bb+ eff'));
  const lg = el('div', 'hleg');
  lg.appendChild(el('span', 'n', '3bNA'));
  lg.appendChild(el('span', '', 'CC'));
  lg.appendChild(el('span', 'a', '3bAI'));
  lg.appendChild(el('span', '', 'f4b'));
  hd.appendChild(lg);
  m.appendChild(hd);
  const g = el('div', 'hgrid');
  g.appendChild(el('div', 'hh'));
  g.appendChild(el('div', 'hh r', '3b'));
  heads.forEach((t) => g.appendChild(el('div', 'hh', t)));
  h.rows.forEach((r) => {
    g.appendChild(el('div', 'hl', r[0]));
    g.appendChild(el('div', 'h3', r[1].replace('~', '')));
    for (let i = 0; i < 6; i++) {
      if (!r[2][i]) { g.appendChild(el('div', 'hm none')); continue; }
      const v = r[2][i].split(' ');
      const c = el('div', 'hm');
      c.appendChild(val('a1', v[0]));
      c.appendChild(val('a2', v[1]));
      c.appendChild(val('b1', v[2]));
      c.appendChild(val('b2', v[3]));
      g.appendChild(c);
    }
  });
  m.appendChild(g);
  body.appendChild(m);
  w.appendChild(body);
  screenEl.appendChild(w);
});
```
